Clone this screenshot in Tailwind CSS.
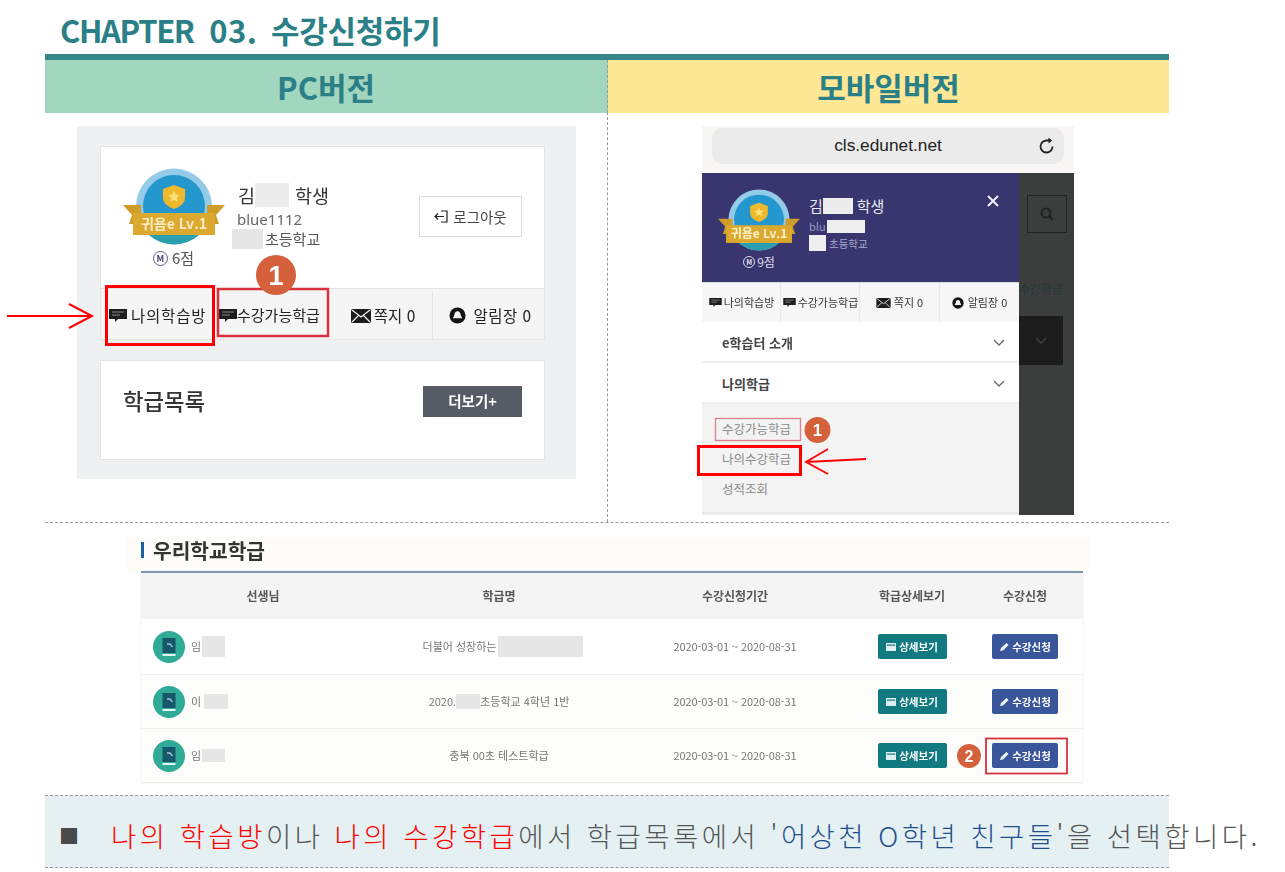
<!DOCTYPE html>
<html lang="ko">
<head>
<meta charset="utf-8">
<title>CHAPTER 03. 수강신청하기</title>
<script src="https://cdn.jsdelivr.net/npm/@tailwindcss/browser@4"></script>
</head>
<body class="bg-white">
<svg class="hidden" width="0" height="0">
  <defs>
    <symbol id="badge" viewBox="0 0 102 77">
      <circle cx="51" cy="38.500" r="38" fill="#93cbe8"/>
      <circle cx="51" cy="38" r="31" fill="#2497cf"/>
      <path d="M51 17 L62 21 V30 Q62 37 51 41 Q40 37 40 30 V21 Z" fill="#f0b92c"/>
      <path d="M51 23 l1.800 3.700 4 .4-3 2.700.9 3.900-3.700-2-3.700 2 .9-3.900-3-2.700 4-.4z" fill="#fde27a"/>
      <path d="M0 37 H18 V56 H6 L9 47 Z" fill="#cf9c2a"/>
      <path d="M102 37 H84 V56 H96 L93 47 Z" fill="#cf9c2a"/>
      <rect x="10" y="45" width="82" height="22" fill="#dca92f"/>
      <path d="M26 67 A38 38 0 0 0 76 67 Z" fill="#2a9fb0"/>
    </symbol>
    <symbol id="chat" viewBox="0 0 18 13">
      <path d="M0 0H18V10H9L6 13V10H0Z" fill="#1d1d1d"/>
      <path d="M3 3H15M3 6H11" stroke="#8a8a8a" stroke-width="1.200"/>
    </symbol>
    <symbol id="mail" viewBox="0 0 20 14">
      <rect width="20" height="14" rx="1.500" fill="#1c1c1c"/>
      <path d="M1 1L10 8L19 1M1 13L7.500 6.500M19 13L12.500 6.500" stroke="#f4f4f4" stroke-width="1.200" fill="none"/>
    </symbol>
    <symbol id="bell" viewBox="0 0 18 18">
      <circle cx="9" cy="9" r="8.500" fill="#141414"/>
      <path d="M9 4.500C11.500 4.500 12 6.500 12.500 9L14 12H4L5.500 9C6 6.500 6.500 4.500 9 4.500Z" fill="#f4f4f4"/>
    </symbol>
    <symbol id="book" viewBox="0 0 32 32">
      <circle cx="16" cy="16" r="16" fill="#30ab98"/>
      <rect x="9.500" y="7" width="13" height="15" fill="#17566b"/>
      <rect x="9.500" y="23" width="13" height="2" fill="#e3f3ef"/>
      <path d="M14 13h3l2.500 3" stroke="#a5c9d2" stroke-width="1.300" fill="none"/>
    </symbol>
    <symbol id="cardi" viewBox="0 0 10 8">
      <rect width="10" height="8" fill="#dfeff0"/>
      <rect y="1.500" x="0.800" width="8.400" height="1.200" fill="#117a80"/>
    </symbol>
    <symbol id="pen" viewBox="0 0 10 10">
      <path d="M1 9L2 6L7.500 1L9.500 3L4 8.500Z" fill="#f4f6fb"/>
    </symbol>
    <symbol id="chev" viewBox="0 0 12 7">
      <path d="M1 1L6 6L11 1" fill="none" stroke="currentColor" stroke-width="1.300"/>
    </symbol>
  </defs>
</svg>

<main class="relative w-[1285px] h-[872px] overflow-hidden bg-white font-['Noto_Sans_CJK_KR',sans-serif]">

  <h1 class="h-[54px] pl-[60px] pt-[7px] text-[31px] leading-[46px] font-bold text-[#2b7f87] whitespace-pre"><span class="tracking-[-1.400px]">CHAPTER</span> <span class="ml-[7px] tracking-[0.500px]">03.</span> <span class="ml-[5px] tracking-[-0.300px]">수강신청하기</span></h1>

  <div class="ml-[45px] w-[1124px]">
    <div class="h-[6px] bg-[#37868c]"></div>

    <div class="grid grid-cols-[563px_561px] h-[52px] border-b border-dashed border-[#999] text-[31px] leading-[53px] font-bold text-center text-[#2b7f87]">
      <div class="bg-[#a1d6bf] border-r border-dashed border-[#999]">PC버전</div>
      <div class="bg-[#fee896] text-[#2b7f87]">모바일버전</div>
    </div>

    <div class="grid grid-cols-[563px_561px] h-[411px] border-b border-dashed border-[#999]">
      <!-- PC -->
      <div class="border-r border-dashed border-[#999] pl-[32px] pt-[14px]">
        <div class="w-[499px] h-[353px] bg-[#eff0f2] pl-[23px] pt-[20px] blur-[0.4px]">
          <div class="w-[445px] h-[194px] bg-white border border-[#e4e4e4] flex flex-col">
            <div class="flex h-[141px] shrink-0 pl-[22px] pt-[21px]">
              <div class="w-[102px] flex flex-col items-center">
                <div class="relative w-[102px] h-[77px]">
                  <svg class="w-[102px] h-[77px]"><use href="#badge"/></svg>
                  <span class="absolute left-0 right-0 top-[45px] text-center text-[14px] leading-[20px] font-bold text-[#f8ebc4]">귀욤e Lv.1</span>
                </div>
                <div class="mt-[3px] -ml-[1px] flex items-center gap-[4px] text-[15px] leading-[20px] text-[#555]">
                  <span class="w-[15px] h-[15px] rounded-full border border-[#5a5a8c] text-[9px] leading-[13px] text-center font-bold text-[#4a4a7c]">M</span>6점
                </div>
              </div>
              <div class="ml-[13px] pt-[15px] text-[#555]">
                <div class="flex items-center text-[18.500px] leading-[24px] text-[#333]">김<span class="mr-[6px] w-[34px] h-[24px] bg-[#ececec]"></span>학생</div>
                <div class="text-[15px] leading-[20px] mt-[2px] text-[#666] font-['Noto_Sans'] -ml-[1px]">blue1112</div>
                <div class="flex items-center text-[15px] leading-[20px] -ml-[6px]"><span class="w-[31px] h-[20px] bg-[#e6e6e6] mr-[2px]"></span>초등학교</div>
              </div>
              <div class="ml-auto mr-[22px] mt-[28px] w-[103px] h-[41px] border border-[#ddd] flex items-center justify-center gap-[5px] text-[14.500px] text-[#444]">
                <svg class="w-[14px] h-[13px]" viewBox="0 0 14 13" fill="none" stroke="#222" stroke-width="1.200"><path d="M7 1H13V12H7M10 6.500H1M4 3.500L1 6.500L4 9.500"/></svg>로그아웃
              </div>
            </div>
            <div class="flex-1 grid grid-cols-[117px_116px_99px_1fr] bg-[#f5f5f5] border-t border-[#e2e2e2] text-[15.500px] text-[#222] pt-[3px]">
              <div class="flex items-center pl-[8px] gap-[4px] tracking-[0.800px]"><svg class="w-[18px] h-[13px]"><use href="#chat"/></svg>나의학습방</div>
              <div class="flex items-center pl-[1px] text-[15px]"><svg class="w-[18px] h-[13px]"><use href="#chat"/></svg>수강가능학급</div>
              <div class="flex items-center justify-center gap-[3px] border-r border-[#e4e4e4]"><svg class="w-[20px] h-[14px]"><use href="#mail"/></svg>쪽지 0</div>
              <div class="flex items-center justify-center gap-[7px] tracking-[0.500px] pl-[4px]"><svg class="w-[17px] h-[17px]"><use href="#bell"/></svg>알림장 0</div>
            </div>
          </div>
          <div class="mt-[20px] w-[445px] h-[100px] bg-white border border-[#e4e4e4] flex items-center justify-between pl-[22px] pr-[22px]">
            <span class="text-[22.300px] font-medium text-[#333] -mt-[19px]">학급목록</span>
            <span class="w-[99px] h-[31px] -mt-[17px] bg-[#565c66] text-white text-[14.500px] font-bold leading-[30px] text-center">더보기+</span>
          </div>
        </div>
      </div>

      <!-- Mobile -->
      <div class="pl-[94px] pt-[14px]">
        <div class="w-[372px] h-[389px] blur-[0.4px] overflow-hidden">
          <div class="h-[47px] bg-[#f8f7f5] pl-[10px] pr-[10px] pt-[2px]">
            <div class="h-[36px] rounded-[10px] bg-[#ebebeb] flex items-center relative">
              <span class="w-full text-center text-[17.300px] text-[#222] font-['Liberation_Sans']">cls.edunet.net</span>
              <svg class="absolute right-[8px] top-[9px] w-[18px] h-[18px]" viewBox="0 0 18 18" fill="none" stroke="#222" stroke-width="1.800"><path d="M14.500 9.500A6 6 0 1 1 9 3.500H13"/><path d="M10.500 0.500L14 3.500L10.500 6.500" fill="#222" stroke="none"/></svg>
            </div>
          </div>
          <div class="grid grid-cols-[317px_55px] h-[342px]">
            <div class="flex flex-col">
              <div class="h-[109px] bg-[#39366f] flex pl-[16px] pt-[16px] relative shrink-0">
                <div class="w-[82px] flex flex-col items-center">
                  <div class="relative w-[82px] h-[62px]">
                    <svg class="w-[82px] h-[62px]"><use href="#badge"/></svg>
                    <span class="absolute left-0 right-0 top-[36px] text-center text-[12px] leading-[16px] font-bold text-[#fbf1cf]">귀욤e Lv.1</span>
                  </div>
                  <div class="mt-[3px] flex items-center gap-[2px] text-[12px] leading-[16px] text-[#dcdcea]">
                    <span class="w-[12px] h-[12px] rounded-full border border-[#dcdcea] text-[7px] leading-[10px] text-center font-bold">M</span>9점
                  </div>
                </div>
                <div class="ml-[9px] pt-[7px] text-[#d8d8e8]">
                  <div class="flex items-center text-[15px] leading-[20px] text-[#e9e9f2]">김<span class="mr-[4px] w-[30px] h-[16px] bg-[#ececec]"></span>학생</div>
                  <div class="flex items-center text-[11px] leading-[15px] mt-[3px] text-[#9a9ac0]">blu<span class="w-[38px] h-[13px] bg-[#eeeeee] ml-[1px]"></span></div>
                  <div class="flex items-center text-[10.500px] leading-[15px] text-[#aaaacc] mt-[1px]"><span class="w-[17px] h-[16px] bg-[#eeeeee] mr-[3px]"></span>초등학교</div>
                </div>
                <svg class="absolute right-[20px] top-[22px] w-[12px] h-[12px]" viewBox="0 0 12 12" stroke="#f2f2f6" stroke-width="2"><path d="M1 1L11 11M11 1L1 11"/></svg>
              </div>
              <div class="h-[40px] shrink-0 grid grid-cols-[79px_79px_80px_1fr] bg-[#f6f6f6] border-t border-[#dddddd] text-[11px] text-[#333]">
                <div class="flex items-center justify-center gap-[1px] border-r border-[#e8e8e8]"><svg class="w-[15px] h-[9px]"><use href="#chat"/></svg>나의학습방</div>
                <div class="flex items-center justify-center gap-[1px] border-r border-[#e8e8e8]"><svg class="w-[15px] h-[9px]"><use href="#chat"/></svg>수강가능학급</div>
                <div class="flex items-center justify-center gap-[3px] border-r border-[#e8e8e8]"><svg class="w-[15px] h-[10px]"><use href="#mail"/></svg>쪽지 0</div>
                <div class="flex items-center justify-center gap-[4px]"><svg class="w-[12px] h-[12px]"><use href="#bell"/></svg>알림장 0</div>
              </div>
              <div class="h-[41px] shrink-0 bg-white border-b-2 border-[#efefef] flex items-center justify-between pl-[20px] pr-[14px] pt-[2px] text-[13px] font-bold text-[#444]">e학습터 소개<svg class="w-[12px] h-[7px] text-[#666]"><use href="#chev"/></svg></div>
              <div class="h-[41px] shrink-0 bg-white border-b-2 border-[#efefef] flex items-center justify-between pl-[20px] pr-[14px] pt-[2px] text-[13px] font-bold text-[#444]">나의학급<svg class="w-[12px] h-[7px] text-[#666]"><use href="#chev"/></svg></div>
              <div class="flex-1 bg-[#f3f3f3] pl-[20px] pt-[10px] text-[12.500px] leading-[30px] text-[#8a8a8a] border-b-[3px] border-[#ececec]">
                <div>수강가능학급</div>
                <div>나의수강학급</div>
                <div>성적조회</div>
              </div>
            </div>
            <div class="bg-[#3c3e3d] flex flex-col items-start">
              <div class="ml-[8px] mt-[22px] w-[40px] h-[38px] border border-[#222] flex items-center justify-center">
                <svg class="w-[14px] h-[14px]" viewBox="0 0 14 14" fill="none" stroke="#222" stroke-width="2"><circle cx="6" cy="6" r="4.500"/><path d="M9.500 9.500L13 13"/></svg>
              </div>
              <div class="mt-[46px] h-[20px] w-[44px] overflow-hidden text-[12px] leading-[20px] text-[#233a3a] whitespace-nowrap">수강학급</div>
              <div class="mt-[17px] w-[44px] h-[49px] bg-[#1c1c1c] flex items-center justify-center"><svg class="w-[12px] h-[7px] text-[#444]"><use href="#chev"/></svg></div>
            </div>
          </div>
        </div>
      </div>
    </div>

    <!-- School class table -->
    <div class="ml-[96px] w-[942px] pt-[14px] pb-[12px] blur-[0.35px]">
      <div class="h-[34px] bg-[#fdfcf9] flex items-center text-[20.300px] font-bold text-[#333] -ml-[15px] -mr-[7px] pl-[15px] pb-[8px]">
        <span class="w-[3px] h-[16px] bg-[#1a5fa8] mr-[9px]"></span><span>우리학교학급</span>
      </div>
      <div class="border-t-2 border-[#8197ad] bg-white shadow-[0_0_2px_#e8e8e8]">
        <div class="grid grid-cols-[244px_228px_244px_110px_116px] h-[46px] bg-[#f4f4f4] items-center text-center text-[12px] font-bold text-[#555]">
          <div>선생님</div><div>학급명</div><div>수강신청기간</div><div>학급상세보기</div><div>수강신청</div>
        </div>
        <div class="grid grid-cols-[244px_228px_244px_110px_116px] h-[56px] bg-white items-center text-center text-[11px] text-[#777] border-b border-[#eeeeee]">
          <div class="flex items-center pl-[12px] gap-[6px]"><svg class="w-[32px] h-[32px]"><use href="#book"/></svg>임<span class="-ml-[5px] w-[23px] h-[21px] bg-[#e6e6e6]"></span></div>
          <div class="flex items-center justify-center pl-[8px]">더불어 성장하는<span class="ml-[2px] w-[85px] h-[21px] bg-[#e6e6e6]"></span></div>
          <div class="tracking-[-0.100px]">2020-03-01 ~ 2020-08-31</div>
          <div class="flex justify-center"><span class="w-[69px] h-[25px] rounded-[2px] bg-[#117a80] text-white text-[10.500px] font-bold flex items-center justify-center gap-[3px]"><svg class="w-[10px] h-[8px]"><use href="#cardi"/></svg>상세보기</span></div>
          <div class="flex justify-center"><span class="w-[66px] h-[25px] rounded-[2px] bg-[#3a569b] text-white text-[10.500px] font-bold flex items-center justify-center gap-[3px]"><svg class="w-[10px] h-[10px]"><use href="#pen"/></svg>수강신청</span></div>
        </div>
        <div class="grid grid-cols-[244px_228px_244px_110px_116px] h-[54px] bg-[#fdfdfb] items-center text-center text-[11px] text-[#777] border-b border-[#eeeeee]">
          <div class="flex items-center pl-[12px] gap-[6px]"><svg class="w-[32px] h-[32px]"><use href="#book"/></svg>이<span class="-ml-[3px] w-[24px] h-[15px] bg-[#e6e6e6]"></span></div>
          <div class="flex items-center justify-center">2020.<span class="w-[24px] h-[15px] bg-[#e6e6e6]"></span>초등학교 4학년 1반</div>
          <div class="tracking-[-0.100px]">2020-03-01 ~ 2020-08-31</div>
          <div class="flex justify-center"><span class="w-[69px] h-[25px] rounded-[2px] bg-[#117a80] text-white text-[10.500px] font-bold flex items-center justify-center gap-[3px]"><svg class="w-[10px] h-[8px]"><use href="#cardi"/></svg>상세보기</span></div>
          <div class="flex justify-center"><span class="w-[66px] h-[25px] rounded-[2px] bg-[#3a569b] text-white text-[10.500px] font-bold flex items-center justify-center gap-[3px]"><svg class="w-[10px] h-[10px]"><use href="#pen"/></svg>수강신청</span></div>
        </div>
        <div class="grid grid-cols-[244px_228px_244px_110px_116px] h-[54px] bg-[#fdfdfb] items-center text-center text-[11px] text-[#777] border-b border-[#eeeeee]">
          <div class="flex items-center pl-[12px] gap-[6px]"><svg class="w-[32px] h-[32px]"><use href="#book"/></svg>임<span class="-ml-[5px] w-[23px] h-[13px] bg-[#e6e6e6]"></span></div>
          <div>충북 00초 테스트학급</div>
          <div class="tracking-[-0.100px]">2020-03-01 ~ 2020-08-31</div>
          <div class="flex justify-center"><span class="w-[69px] h-[25px] rounded-[2px] bg-[#117a80] text-white text-[10.500px] font-bold flex items-center justify-center gap-[3px]"><svg class="w-[10px] h-[8px]"><use href="#cardi"/></svg>상세보기</span></div>
          <div class="flex justify-center"><span class="w-[66px] h-[25px] rounded-[2px] bg-[#3a569b] text-white text-[10.500px] font-bold flex items-center justify-center gap-[3px]"><svg class="w-[10px] h-[10px]"><use href="#pen"/></svg>수강신청</span></div>
        </div>
      </div>
    </div>

    <!-- Instruction band -->
    <div class="h-[73px] bg-[#e4f0f2] border-y border-dashed border-[#999] flex items-center whitespace-nowrap pt-[9px]">
      <span class="ml-[14px] w-[52px] shrink-0 text-[20px] text-[#4a4a4a]">■</span>
      <p class="shrink-0 text-[27.500px] font-light tracking-[3.450px] text-[#555]"><span class="text-[#ff0000]">나의 학습방</span>이나 <span class="text-[#ff0000]">나의 수강학급</span>에서 학급목록에서 '<span class="text-[#1f4e8c]">어상천 O학년 친구들</span>'을 선택합니다.</p>
    </div>
  </div>

  <!-- Annotations laid over the screenshots -->
  <svg class="absolute left-0 top-0 w-[1285px] h-[872px] pointer-events-none" viewBox="0 0 1285 872" fill="none">
    <path d="M7 316H92M69 304L92 316L69 328" stroke="#ff0000" stroke-width="2"/>
    <rect x="106.500" y="286.500" width="107" height="58" stroke="#ff0000" stroke-width="3"/>
    <rect x="218" y="289" width="110" height="47" stroke="#d8303c" stroke-width="2.500"/>
    <rect x="715.500" y="418.500" width="85" height="22" stroke="#dc7f8c" stroke-width="1.300"/>
    <rect x="698.500" y="446.500" width="102" height="28" stroke="#ff0000" stroke-width="3"/>
    <path d="M866 459L806 462M828 449L806 462L828 474" stroke="#ff0000" stroke-width="1.800"/>
    <rect x="986" y="738.500" width="81" height="35" stroke="#d8303c" stroke-width="1.800"/>
    <circle cx="276" cy="275" r="20" fill="#d4603c"/>
    <circle cx="817.500" cy="430" r="13" fill="#d4603c"/>
    <circle cx="969" cy="756" r="12" fill="#d4603c"/>
    <text x="276" y="285" text-anchor="middle" font-size="27" font-weight="700" fill="#fff" font-family="Liberation Sans">1</text>
    <text x="817.500" y="436" text-anchor="middle" font-size="17" font-weight="700" fill="#fff" font-family="Liberation Sans">1</text>
    <text x="969" y="762" text-anchor="middle" font-size="16" font-weight="700" fill="#fff" font-family="Liberation Sans">2</text>
  </svg>
</main>
</body>
</html>
